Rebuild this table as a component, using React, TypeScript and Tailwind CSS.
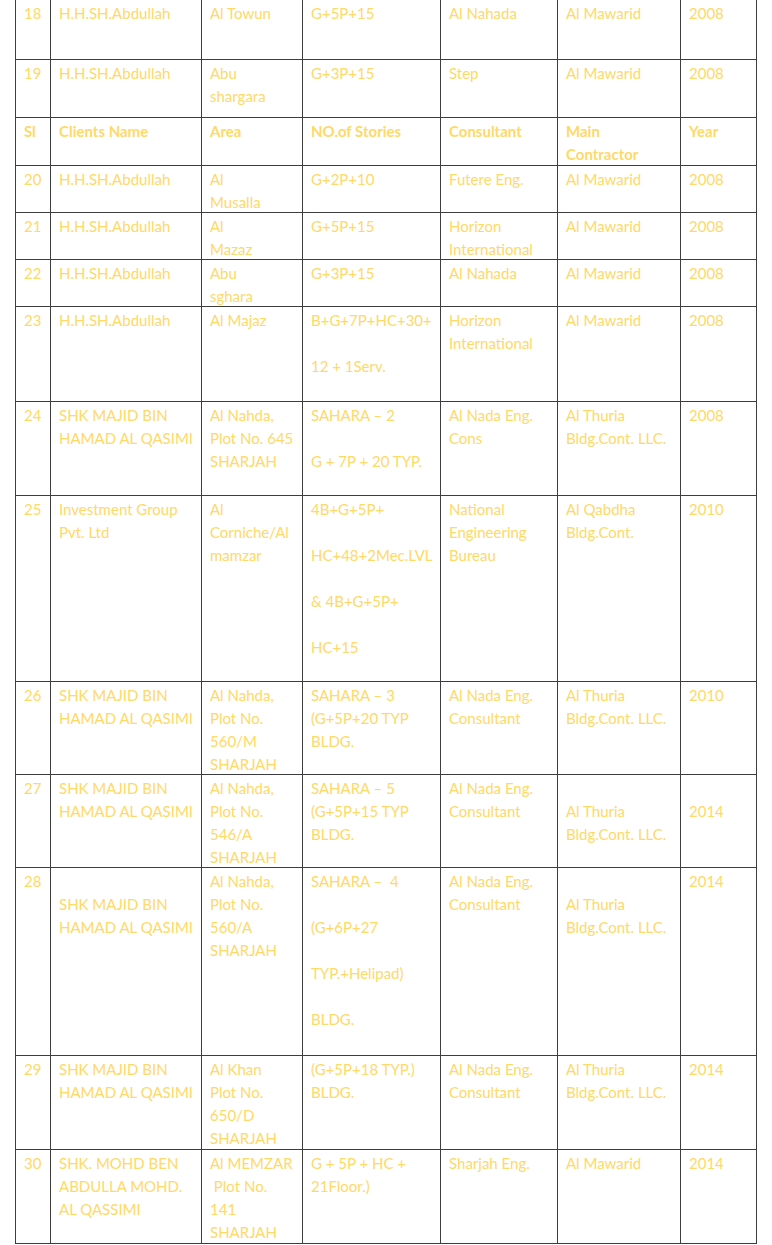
import React from 'react';

type Cell = string | string[];

interface Row {
  heightClass: string;
  cells: Cell[];
  header?: boolean;
}

const SHK = ['SHK MAJID BIN', 'HAMAD AL QASIMI'];
const THURIA = ['Al Thuria', 'Bldg.Cont. LLC.'];
const NADA = ['Al Nada Eng.', 'Consultant'];

const rows: Row[] = [
  { heightClass: 'h-[60px]', cells: ['18', 'H.H.SH.Abdullah', 'Al Towun', 'G+5P+15', 'Al Nahada', 'Al Mawarid', '2008'] },
  { heightClass: 'h-[58px]', cells: ['19', 'H.H.SH.Abdullah', ['Abu', 'shargara'], 'G+3P+15', 'Step', 'Al Mawarid', '2008'] },
  { heightClass: 'h-[48px]', header: true, cells: ['Sl', 'Clients Name', 'Area', 'NO.of Stories', 'Consultant', ['Main', 'Contractor'], 'Year'] },
  { heightClass: 'h-[47px]', cells: ['20', 'H.H.SH.Abdullah', ['Al', 'Musalla'], 'G+2P+10', 'Futere Eng.', 'Al Mawarid', '2008'] },
  { heightClass: 'h-[47px]', cells: ['21', 'H.H.SH.Abdullah', ['Al', 'Mazaz'], 'G+5P+15', ['Horizon', 'International'], 'Al Mawarid', '2008'] },
  { heightClass: 'h-[47px]', cells: ['22', 'H.H.SH.Abdullah', ['Abu', 'sghara'], 'G+3P+15', 'Al Nahada', 'Al Mawarid', '2008'] },
  { heightClass: 'h-[95px]', cells: ['23', 'H.H.SH.Abdullah', 'Al Majaz', ['B+G+7P+HC+30+', '', '12 + 1Serv.'], ['Horizon', 'International'], 'Al Mawarid', '2008'] },
  { heightClass: 'h-[94px]', cells: ['24', SHK, ['Al Nahda,', 'Plot No. 645', 'SHARJAH'], ['SAHARA – 2', '', 'G + 7P + 20 TYP.'], ['Al Nada Eng.', 'Cons'], THURIA, '2008'] },
  {
    heightClass: 'h-[186px]',
    cells: [
      '25',
      ['Investment Group', 'Pvt. Ltd'],
      ['Al', 'Corniche/Al', 'mamzar'],
      ['4B+G+5P+', '', 'HC+48+2Mec.LVL', '', '& 4B+G+5P+', '', 'HC+15'],
      ['National', 'Engineering', 'Bureau'],
      ['Al Qabdha', 'Bldg.Cont.'],
      '2010',
    ],
  },
  { heightClass: 'h-[93px]', cells: ['26', SHK, ['Al Nahda,', 'Plot No.', '560/M', 'SHARJAH'], ['SAHARA – 3', '(G+5P+20 TYP', 'BLDG.'], NADA, THURIA, '2010'] },
  { heightClass: 'h-[93px]', cells: ['27', SHK, ['Al Nahda,', 'Plot No.', '546/A', 'SHARJAH'], ['SAHARA – 5', '(G+5P+15 TYP', 'BLDG.'], NADA, ['', ...THURIA], ['', '2014']] },
  {
    heightClass: 'h-[188px]',
    cells: [
      '28',
      ['', ...SHK],
      ['Al Nahda,', 'Plot No.', '560/A', 'SHARJAH'],
      ['SAHARA –  4', '', '(G+6P+27', '', 'TYP.+Helipad)', '', 'BLDG.'],
      NADA,
      ['', ...THURIA],
      '2014',
    ],
  },
  { heightClass: 'h-[94px]', cells: ['29', SHK, ['Al Khan', 'Plot No.', '650/D', 'SHARJAH'], ['(G+5P+18 TYP.)', 'BLDG.'], NADA, THURIA, '2014'] },
  {
    heightClass: 'h-[94px]',
    cells: [
      '30',
      ['SHK. MOHD BEN', 'ABDULLA MOHD.', 'AL QASSIMI'],
      ['Al MEMZAR', ' Plot No.', '141', 'SHARJAH'],
      ['G + 5P + HC +', '21Floor.)'],
      'Sharjah Eng.',
      'Al Mawarid',
      '2014',
    ],
  },
];

const colClasses = ['w-[35px]', 'w-[151px]', 'w-[101px]', 'w-[138px]', 'w-[117px]', 'w-[123px]', 'w-[76px]'];

const CellText: React.FC<{ value: Cell }> = ({ value }) => {
  const lines = Array.isArray(value) ? value : [value];
  // nudge text down a touch without growing the row
  return (
    <div className="translate-y-[2px]">
      {lines.map((line, i) => (
        <div key={i} className="h-[23px] whitespace-pre">
          {line === '' ? '\u00a0' : line}
        </div>
      ))}
    </div>
  );
};

export default function App() {
  return (
    <div className="min-h-screen bg-white pl-[15px] -mt-px overflow-hidden">
      <table className="border-collapse table-fixed w-[742px] text-[15px] leading-[23px] text-[#fed968] font-['Lato','Open_Sans',sans-serif]">
        <colgroup>
          {colClasses.map((cls, i) => (
            <col key={i} className={cls} />
          ))}
        </colgroup>
        <tbody>
          {rows.map((row, r) => (
            <tr key={r} className={row.heightClass}>
              {row.cells.map((cell, c) => (
                <td
                  key={c}
                  className={`align-top border border-[#3d3d3d] pl-2 pr-0 py-0 ${row.header ? 'font-bold' : ''}`}
                >
                  <CellText value={cell} />
                </td>
              ))}
            </tr>
          ))}
        </tbody>
      </table>
    </div>
  );
}
